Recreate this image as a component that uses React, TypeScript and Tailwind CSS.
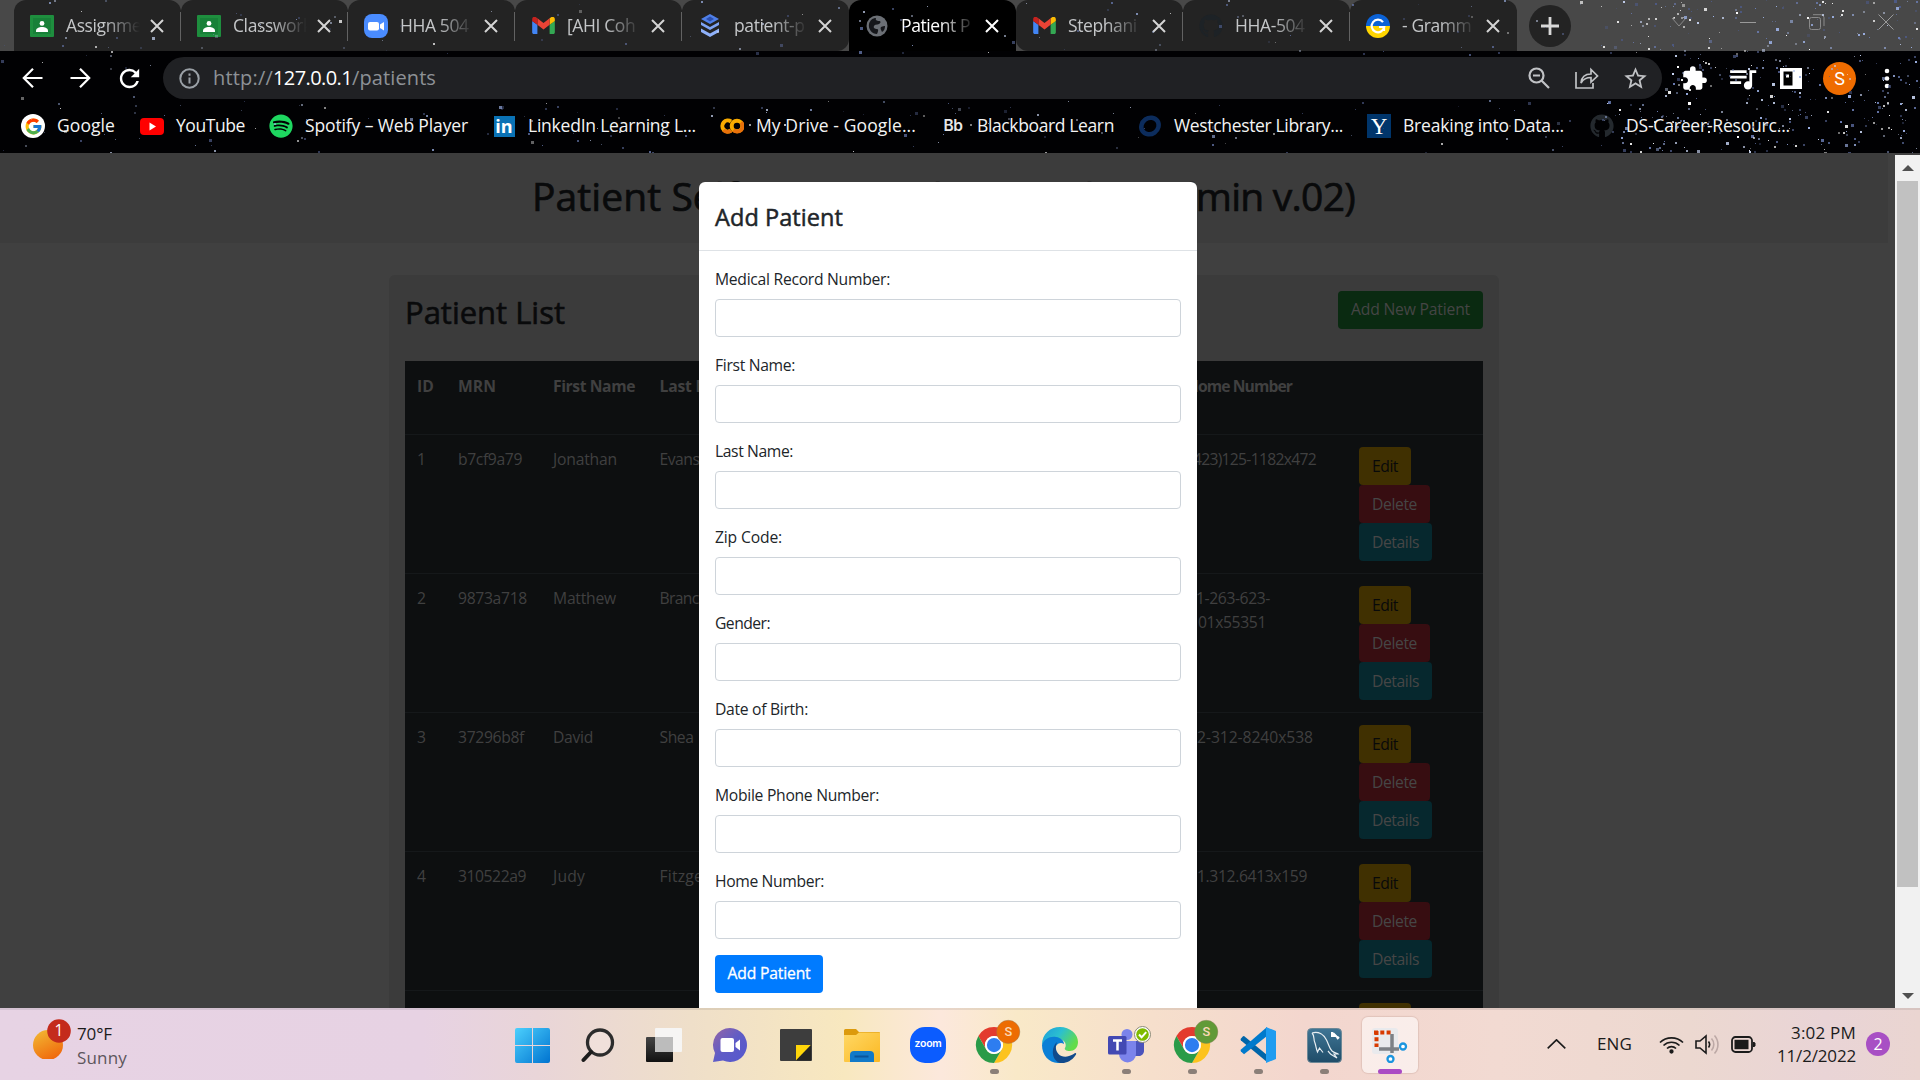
import { useLayoutEffect, useMemo, useRef, useState } from "react";
import type { ReactNode } from "react";
import { FcGoogle } from "react-icons/fc";
import { FaGithub, FaSpotify } from "react-icons/fa";
import { MdExtension, MdQueueMusic, MdRefresh, MdStarBorder } from "react-icons/md";

/* Single line of text whose letter spacing is adjusted so it spans a given width. */
function Fit({ w, children, className = "" }: { w: number; children: string; className?: string }) {
  const ref = useRef<HTMLSpanElement>(null);
  const [spacing, setSpacing] = useState(0);
  useLayoutEffect(() => {
    if (ref.current) setSpacing((w - ref.current.getBoundingClientRect().width) / children.length);
  }, [w, children]);
  return (
    <span ref={ref} className={`inline-block whitespace-pre ${className}`} style={{ letterSpacing: spacing }}>
      {children}
    </span>
  );
}

function Stars() {
  const stars = useMemo(() => {
    let seed = 41;
    const rnd = () => {
      seed = (seed * 16807) % 2147483647;
      return seed / 2147483647;
    };
    const out: { x: number; y: number; s: number; c: string; o: number }[] = [];
    const tints = ["#ffffff", "#9fb4e8", "#6d7fb8", "#c9d6f5", "#4d5a86"];
    for (let i = 0; i < 950; i++) {
      const right = i > 500;
      const x = right ? 1600 + rnd() * 320 : rnd() * 1660;
      const y = rnd() * 153;
      const s = rnd() > 0.88 ? 3 : rnd() > 0.4 ? 2 : 1;
      const c = tints[Math.floor(rnd() * tints.length)];
      const o = right ? 0.35 + rnd() * 0.65 : 0.25 + rnd() * 0.5;
      if (x > 160 && x < 1664 && y > 54 && y < 100) continue;
      if (y < 51 && x < 1600 && rnd() > 0.5) continue;
      out.push({ x: Math.round(x), y: Math.round(y), s, c, o });
    }
    return out;
  }, []);
  return (
    <svg className="pointer-events-none absolute inset-0" width="1920" height="153" viewBox="0 0 1920 153">
      {stars.map((p, i) => (
        <rect key={i} x={p.x} y={p.y} width={p.s} height={p.s} fill={p.c} opacity={p.o} />
      ))}
    </svg>
  );
}

const Classroom = () => (
  <svg width="24" height="22" viewBox="0 0 24 22">
    <rect width="24" height="22" rx="1" fill="#1e8e3e" />
    <rect x="3" y="3" width="18" height="16" fill="#188038" />
    <circle cx="12" cy="8.4" r="2.4" fill="#fff" />
    <path d="M6 16c0-3 3-4 6-4s6 1 6 4v1H6z" fill="#fff" />
  </svg>
);
const ZoomCam = () => (
  <svg width="24" height="24" viewBox="0 0 24 24">
    <rect width="24" height="24" rx="8" fill="#4a8cff" />
    <rect x="4" y="8" width="11" height="8.5" rx="2" fill="#fff" />
    <path d="M16 10.5 20 8v8.500l-4-2.500z" fill="#fff" />
  </svg>
);
const Gmail = () => (
  <svg width="23" height="17" viewBox="0 0 52 39">
    <path d="M3.500 39H12V18L0 9v26.500C0 37.500 1.600 39 3.500 39z" fill="#4285f4" />
    <path d="M40 39h8.500c2 0 3.500-1.600 3.500-3.500V9l-12 9z" fill="#34a853" />
    <path d="M40 3v15l12-9V5c0-4.500-5-7-8.500-4.500z" fill="#fbbc04" />
    <path d="M12 18V3l14 10.500L40 3v15L26 28.500z" fill="#ea4335" />
    <path d="M0 5v4l12 9V3L8.500.5C5-2 0 .5 0 5z" fill="#c5221f" />
  </svg>
);
const Stack = () => (
  <svg width="20" height="23" viewBox="0 0 20 23">
    <path d="M10 0 19 5 10 10 1 5z" fill="#4f7fe8" />
    <path d="M10 2.500 14 5 10 7.500 6 5z" fill="#2b4fae" />
    <path d="M1 8l9 5 9-5v3l-9 5-9-5z" fill="#7ea4f5" />
    <path d="M1 14.500l9 5 9-5v3.500l-9 5-9-5z" fill="#8fb1fa" />
  </svg>
);
const Globe = () => (
  <svg width="22" height="22" viewBox="0 0 22 22">
    <circle cx="11" cy="11" r="10.500" fill="#6b6f75" />
    <path d="M3 9c1-4 4-6 7-6-1 2 1 3 3 3s2 2 0 3-4 0-5 2 1 3 3 3 1 3 0 5c-5 0-9-5-8-10zM15 12c2-1 3-1 4-1 0 3-1 5-3 6-1-2-2-4-1-5z" fill="#15161a" />
  </svg>
);
const Grammarly = () => (
  <svg width="24" height="24" viewBox="0 0 24 24">
    <path d="M0 12a12 12 0 0 1 24 0z" fill="#0b62d6" />
    <path d="M0 12a12 12 0 0 0 24 0z" fill="#ffd500" />
    <path d="M17 8.200a6.300 6.300 0 1 0 1.200 4.800H13M18 17v-4" fill="none" stroke="#fff" strokeWidth="2.200" />
  </svg>
);

const tabs: { icon: ReactNode; title: string; active?: boolean }[] = [
  { icon: <Classroom />, title: "Assignme" },
  { icon: <Classroom />, title: "Classwork" },
  { icon: <ZoomCam />, title: "HHA 504" },
  { icon: <Gmail />, title: "[AHI Coh" },
  { icon: <Stack />, title: "patient-p" },
  { icon: <Globe />, title: "Patient P", active: true },
  { icon: <Gmail />, title: "Stephani" },
  { icon: <FaGithub className="size-6 text-[#1d2226]" />, title: "HHA-504" },
  { icon: <Grammarly />, title: "- Gramm" },
];

function TabStrip() {
  return (
    <div className="flex h-[51px] bg-[#484848] pl-3.5">
      {tabs.map((t, i) => {
        const line = i !== 4 && i !== 5 && i !== 8;
        return (
          <div key={i} className={`relative flex h-full w-[167px] shrink-0 items-center rounded-t-xl pl-4 ${t.active ? "bg-black" : i === 4 ? "rounded-br-xl bg-[#232323]" : i === 6 ? "rounded-bl-xl bg-[#232323]" : "bg-[#232323]"}`}>
            <span className="flex w-6 justify-center">{t.icon}</span>
            <span className={`ml-3 w-[74px] overflow-hidden text-[17.5px] tracking-[-0.4px] whitespace-nowrap [mask-image:linear-gradient(to_right,black_52%,transparent)] ${t.active ? "text-white" : "text-[#c4c6c8]"}`}>{t.title}</span>
            <svg className="ml-[10px]" width="14" height="14" viewBox="0 0 14 14">
              <path d="M1 1l12 12M13 1 1 13" stroke={t.active ? "#fff" : "#d4d4d4"} strokeWidth="2" />
            </svg>
            {line && <span className="absolute top-3 right-0 h-[29px] w-px bg-[#626262]" />}
          </div>
        );
      })}
      <div className="mt-[5px] ml-[12px] flex size-[42px] items-center justify-center rounded-full bg-[#232323]">
        <svg width="18" height="18" viewBox="0 0 18 18"><path d="M9 0v18M0 9h18" stroke="#d8d8d8" strokeWidth="2.800" /></svg>
      </div>
      <div className="ml-auto flex h-[43px] items-center gap-[53px] pr-[26px]">
        <svg width="16" height="16" viewBox="0 0 16 16"><path d="M1 4l7 8 7-8" fill="none" stroke="#8a8a8a" /></svg>
        <svg width="16" height="16" viewBox="0 0 16 16"><path d="M0 8.500h16" stroke="#9a9a9a" /></svg>
        <svg width="16" height="16" viewBox="0 0 16 16"><path d="M.5 5.500a2 2 0 0 1 2-2h7a2 2 0 0 1 2 2v8a2 2 0 0 1-2 2h-7a2 2 0 0 1-2-2zM4 .7h8a3 3 0 0 1 3 3V12" fill="none" stroke="#8a8a8a" /></svg>
        <svg width="16" height="16" viewBox="0 0 16 16"><path d="M.5.500l15 15M15.500.500l-15 15" stroke="#9a9a9a" /></svg>
      </div>
    </div>
  );
}

function Toolbar() {
  return (
    <div className="flex h-[54px] items-center pl-[22px]">
      <div className="flex w-[141px] items-center gap-[27px]">
        <svg width="21" height="20" viewBox="0 0 21 20"><path d="M20.500 10H2M11 .8 1.800 10l9.200 9.200" fill="none" stroke="#fff" strokeWidth="2.200" /></svg>
        <svg width="21" height="20" viewBox="0 0 21 20"><path d="M.5 10H19M10 .8l9.200 9.200L10 19.200" fill="none" stroke="#fff" strokeWidth="2.200" /></svg>
        <MdRefresh className="-ml-[3px] size-[29px] text-white" />
      </div>
      <div className="flex h-[42px] w-[1499px] items-center rounded-full bg-[#202124] pl-4">
        <svg width="21" height="21" viewBox="0 0 21 21"><circle cx="10.500" cy="10.500" r="9.200" fill="none" stroke="#9aa0a6" strokeWidth="2" /><path d="M10.500 9.500v6M10.500 5.500v2.200" stroke="#9aa0a6" strokeWidth="2" /></svg>
        <div className="ml-[13px] flex text-[20px] leading-none text-[#8d9196]">
          <Fit w={60}>http://</Fit>
          <Fit w={79} className="text-white">127.0.0.1</Fit>
          <Fit w={84}>/patients</Fit>
        </div>
        <div className="mr-[13px] ml-auto flex items-center gap-[25px] text-[#c0c2c5]">
          <svg width="22" height="22" viewBox="0 0 22 22" fill="none" stroke="currentColor" strokeWidth="2.200"><circle cx="8.500" cy="8.500" r="7" /><path d="M13.500 13.500 21 21M5 8.500h7" /></svg>
          <svg width="24" height="22" viewBox="0 0 24 22" fill="none" stroke="currentColor" strokeWidth="1.700"><path d="M1 5v16h17v-5M6 16c.5-6 4-9 10-9V2.500l6.500 6.500L16 15v-4.500c-5 0-8 2-10 5.500z" /></svg>
          <MdStarBorder className="-ml-[2px] size-[27px]" />
        </div>
      </div>
      <div className="ml-[19px] flex items-center text-white">
        <MdExtension className="size-[27px]" />
        <MdQueueMusic className="ml-[18px] size-[33px]" />
        <svg className="ml-[21px]" width="22" height="21" viewBox="0 0 22 21"><rect width="22" height="21" fill="#fff" /><path d="M3.500 3.500h9v14h-9z" fill="#000" /><rect x="6" y="6.500" width="3" height="3" fill="#fff" /></svg>
        <span className="ml-[21px] flex size-[33px] items-center justify-center rounded-full bg-[#ef6c00] font-[Roboto] text-[18px]">S</span>
        <svg className="ml-[28px]" width="6" height="21" viewBox="0 0 6 21" fill="#fff"><circle cx="3" cy="3" r="2.300" /><circle cx="3" cy="10.500" r="2.300" /><circle cx="3" cy="18" r="2.300" /></svg>
      </div>
    </div>
  );
}

function Bookmark({ box, icon, label, w }: { box: string; icon: ReactNode; label: string; w: number }) {
  return (
    <div className={`flex shrink-0 items-center ${box}`}>
      <span className="flex w-6 justify-center">{icon}</span>
      <span className="mb-px ml-3 text-[17.500px] text-[#f4f4f4]"><Fit w={w}>{label}</Fit></span>
    </div>
  );
}

function Bookmarks() {
  return (
    <div className="flex h-[42px] items-center pl-[21px]">
      <Bookmark box="w-[119px]" w={58} label="Google" icon={<span className="flex size-6 items-center justify-center rounded-full bg-white"><FcGoogle className="size-[19px]" /></span>} />
      <Bookmark box="w-[129px]" w={69} label="YouTube" icon={<svg width="24" height="17" viewBox="0 0 24 17"><rect width="24" height="17" rx="4" fill="#f00" /><path d="M9.500 4.500v8l6.500-4z" fill="#fff" /></svg>} />
      <Bookmark box="w-[223px]" w={163} label="Spotify – Web Player" icon={<FaSpotify className="size-6 text-[#1ed760]" />} />
      <Bookmark box="w-[228px]" w={168} label="LinkedIn Learning L..." icon={<span className="flex h-[21px] w-[21px] items-center justify-center bg-[#0a72b5] pb-px text-[18px] leading-none font-bold text-white">in</span>} />
      <Bookmark box="w-[221px]" w={160} label="My Drive - Google..." icon={<svg width="24" height="16" viewBox="0 0 24 16" fill="none" strokeWidth="4"><path d="M11 3.500a5.500 5.500 0 1 0 0 9" stroke="#f9ab00" /><circle cx="17" cy="8" r="5.300" stroke="#f9ab00" /><path d="M3.500 12a5.500 5.500 0 0 0 7.500.5M21 4.500a5.300 5.300 0 0 1-7.500 7.500" stroke="#e8710a" /></svg>} />
      <Bookmark box="w-[197px]" w={137} label="Blackboard Learn" icon={<span className="font-[Inter] text-[15.500px] font-semibold tracking-[-0.5px] text-[#e8e8e8]">Bb</span>} />
      <Bookmark box="w-[229px]" w={169} label="Westchester Library..." icon={<svg width="24" height="24" viewBox="0 0 24 24"><ellipse cx="12" cy="12" rx="9" ry="8" transform="rotate(-35 12 12)" fill="none" stroke="#0c2c5c" strokeWidth="4.500" /></svg>} />
      <Bookmark box="w-[223px]" w={161} label="Breaking into Data..." icon={<span className="flex size-6 items-center justify-center bg-[#00356b] font-['Liberation_Serif'] text-[23px] leading-none text-white">Y</span>} />
      <Bookmark box="w-[220px]" w={164} label="DS-Career-Resourc..." icon={<FaGithub className="size-6 text-[#24292e]" />} />
    </div>
  );
}

const patients = [
  { id: "1", mrn: "b7cf9a79", mw: 64, first: "Jonathan", fw: 64, last: "Evans", lw: 40, home: [{ t: "(423)125-1182x472", box: "w-[129px]", w: 127 }] },
  { id: "2", mrn: "9873a718", mw: 69, first: "Matthew", fw: 63, last: "Branch", lw: 48, home: [{ t: "1-263-623-", box: "w-[83px]", w: 74 }, { t: "01x55351", box: "w-[79px]", w: 68 }] },
  { id: "3", mrn: "37296b8f", mw: 66, first: "David", fw: 40, last: "Shea", lw: 34, home: [{ t: "2-312-8240x538", box: "w-[126px]", w: 116 }] },
  { id: "4", mrn: "310522a9", mw: 68, first: "Judy", fw: 32, last: "Fitzgerald", lw: 73, home: [{ t: "1.312.6413x159", box: "w-[120px]", w: 110 }] },
];

const grid = "grid grid-cols-[41px_95px_106.500px_527.500px_172px_1fr] pl-3";

function Actions() {
  return (
    <div className="flex flex-col items-start text-[15.700px] text-[#464646]">
      <span className="flex h-[38px] w-[52px] items-center justify-center rounded bg-[#403001] text-[#08090a]"><Fit w={26}>Edit</Fit></span>
      <span className="flex h-[38px] w-[71px] items-center justify-center rounded bg-[#370d11]"><Fit w={45}>Delete</Fit></span>
      <span className="flex h-[38px] w-[73px] items-center justify-center rounded bg-[#06282e]"><Fit w={47}>Details</Fit></span>
    </div>
  );
}

const headings: [string, number][] = [["ID", 17], ["MRN", 38], ["First Name", 82], ["Last Name", 82], ["Home Number", 105]];

function PatientPage() {
  return (
    <div className="h-full overflow-hidden bg-[#404040]">
      <div className="h-[90px] w-[1888px] bg-[#3c3c3c] pt-[19px] pl-[532px]">
        <h1 className="flex w-[823px] justify-between text-[39px] leading-[48px] text-[#090a0b] [-webkit-text-stroke:0.7px_#090a0b]">
          <Fit w={206}>Patient Self</Fit>
          <Fit w={160}>Managed</Fit>
          <Fit w={110}>Portal</Fit>
          <Fit w={217}>(Admin v.02)</Fit>
        </h1>
      </div>
      <div className="mt-8 ml-[389px] w-[1110px] rounded-t-md bg-[#3b3b3b] px-4 pt-4">
        <div className="flex h-[70px] items-start justify-between">
          <h2 className="text-[31px] leading-[42px] text-[#090a0b] [-webkit-text-stroke:0.6px_#090a0b]"><Fit w={160}>Patient List</Fit></h2>
          <span className="flex h-[38px] w-[145px] items-center justify-center rounded bg-[#0a2a11] text-[15.700px] text-[#454545]"><Fit w={119}>Add New Patient</Fit></span>
        </div>
        <div className="w-[1078px] bg-[#0d0f10] text-[15.700px] text-[#404040]">
          <div className={`h-[73px] pt-[13px] font-bold leading-6 ${grid}`}>
            {headings.map(([label, w]) => (
              <span key={label}><Fit w={w}>{label}</Fit></span>
            ))}
          </div>
          {patients.map((p) => (
            <div key={p.id} className={`h-[139px] border-t border-[#15181a] pt-3 leading-6 ${grid}`}>
              <span>{p.id}</span>
              <span><Fit w={p.mw}>{p.mrn}</Fit></span>
              <span><Fit w={p.fw}>{p.first}</Fit></span>
              <span><Fit w={p.lw}>{p.last}</Fit></span>
              <span className="flex flex-col">
                {p.home.map((h) => (
                  <span key={h.t} className={`flex justify-end ${h.box}`}><Fit w={h.w}>{h.t}</Fit></span>
                ))}
              </span>
              <Actions />
            </div>
          ))}
          <div className={`h-[139px] border-t border-[#15181a] pt-3 ${grid}`}>
            <span className="col-start-6"><Actions /></span>
          </div>
        </div>
      </div>
    </div>
  );
}

const fields: [string, number][] = [
  ["Medical Record Number:", 175], ["First Name:", 80], ["Last Name:", 78], ["Zip Code:", 67],
  ["Gender:", 55], ["Date of Birth:", 93], ["Mobile Phone Number:", 164], ["Home Number:", 109],
];

function AddPatientModal() {
  return (
    <div className="absolute top-[29px] left-[699px] h-[900px] w-[498px] rounded-md bg-white text-[#212529]">
      <div className="h-[69px] border-b border-[#dee2e6] px-4 pt-[17px] text-[23.500px] leading-9 [-webkit-text-stroke:0.5px_#212529]"><Fit w={128}>Add Patient</Fit></div>
      <div className="px-4 pt-4">
        {fields.map(([label, w]) => (
          <div key={label} className="mb-4">
            <label className="block h-8 text-[15.700px] leading-6"><Fit w={w}>{label}</Fit></label>
            <div className="h-[38px] rounded border border-[#ced4da]" />
          </div>
        ))}
        <button className="flex h-[38px] w-[108px] items-center justify-center rounded bg-[#007bff] text-[15.700px] text-white [-webkit-text-stroke:0.3px_#fff]"><Fit w={83}>Add Patient</Fit></button>
      </div>
    </div>
  );
}

function Scrollbar() {
  return (
    <div className="mt-0.5 flex w-[25px] flex-col items-center bg-[#f1f1f1]">
      <div className="flex h-[26px] items-center"><svg width="12" height="6" viewBox="0 0 12 6"><path d="M0 6 6 0l6 6z" fill="#505050" /></svg></div>
      <div className="h-[706px] w-[21px] bg-[#c1c1c1]" />
      <div className="mt-auto flex h-[25px] items-center"><svg width="12" height="6" viewBox="0 0 12 6"><path d="M0 0h12L6 6z" fill="#505050" /></svg></div>
    </div>
  );
}

const ChromeIcon = ({ color }: { color: string }) => (
  <svg className="overflow-visible" width="36" height="36" viewBox="0 0 48 48">
    <path d="M24 12H44.800A24 24 0 0 0 3.200 12L13.600 30A12 12 0 0 1 24 12z" fill="#e33b2e" />
    <path d="M44.800 12A24 24 0 0 1 24 48L34.400 30A12 12 0 0 0 24 12z" fill="#fcc31e" />
    <path d="M3.200 12A24 24 0 0 0 24 48L34.400 30A12 12 0 0 1 13.600 30z" fill="#2a9b48" />
    <circle cx="24" cy="24" r="12" fill="#fff" />
    <circle cx="24" cy="24" r="9.500" fill="#2d7df0" />
    <circle cx="43" cy="6.500" r="15.500" fill={color} stroke="#8d7a5e" strokeOpacity=".5" />
    <text x="43" y="12.500" textAnchor="middle" fontFamily="Roboto" fontWeight="500" fontSize="17" fill="#fbd9b8">S</text>
  </svg>
);

const dock: { icon: ReactNode; run?: boolean; active?: boolean }[] = [
  { icon: <svg width="35" height="35" viewBox="0 0 35 35"><defs><linearGradient id="win" gradientUnits="userSpaceOnUse" x1="0" y1="0" x2="35" y2="35"><stop stopColor="#4cd0fd" /><stop offset="1" stopColor="#0073d0" /></linearGradient></defs><path d="M2 0h15v17H0V2a2 2 0 0 1 2-2zM18 0h15a2 2 0 0 1 2 2v15H18zM0 18h17v17H2a2 2 0 0 1-2-2zM18 18h17v15a2 2 0 0 1-2 2H18z" fill="url(#win)" /></svg> },
  { icon: <svg width="34" height="35" viewBox="0 0 34 35"><circle cx="19" cy="14.500" r="12.500" fill="#f3e5df" fillOpacity=".6" stroke="#2c2c2c" strokeWidth="3.300" /><path d="M10 24l-7.500 8" stroke="#1c1c1c" strokeWidth="4" strokeLinecap="round" /></svg> },
  { icon: <svg width="36" height="34" viewBox="0 0 36 34"><defs><linearGradient id="tv" x1="0" y1="0" x2="0" y2="1"><stop stopColor="#444" /><stop offset="1" stopColor="#111" /></linearGradient></defs><rect y="9" width="27" height="25" rx="1" fill="url(#tv)" /><rect x="9" width="27" height="24" rx="1" fill="#f6f6f6" fillOpacity=".94" /><rect x="9" y="9" width="18" height="15" fill="#bcbcbc" /></svg> },
  { icon: <svg width="34" height="34" viewBox="0 0 34 34"><defs><linearGradient id="chat" x1="0" y1="0" x2="1" y2="1"><stop stopColor="#9565a6" /><stop offset=".5" stopColor="#5f5cc6" /><stop offset="1" stopColor="#5558cf" /></linearGradient></defs><path d="M17 0a17 17 0 1 1-7 32.500L0 34l2-9A17 17 0 0 1 17 0z" fill="url(#chat)" /><rect x="7.500" y="10" width="13.500" height="14" rx="2" fill="#fff" /><path d="M22.500 15 27 11.500v11L22.500 19z" fill="#fff" /></svg> },
  { icon: <svg width="32" height="32" viewBox="0 0 32 32"><rect width="32" height="32" rx="1" fill="#3d3d3d" /><path d="M16 16h15L16 31.500z" fill="#ffd60a" /><path d="M31 16 16 31.500h15z" fill="#242424" /></svg> },
  { icon: <svg width="36" height="33" viewBox="0 0 36 33"><defs><linearGradient id="fold" x1="0" y1="0" x2="1" y2="1"><stop stopColor="#ffd865" /><stop offset="1" stopColor="#fbb823" /></linearGradient></defs><path d="M0 1.500A1.500 1.500 0 0 1 1.500 0H12l3 3h20a1 1 0 0 1 1 1v6H0z" fill="#dc9a0c" /><path d="M0 6h12l3-2.500h21V32a1 1 0 0 1-1 1H1a1 1 0 0 1-1-1z" fill="url(#fold)" /><path d="M6 33v-7a4 4 0 0 1 4-4h16a4 4 0 0 1 4 4v7z" fill="#1279c8" /><path d="M10.500 27.500h14" stroke="#0b559b" strokeWidth="2" /></svg> },
  { icon: <span className="flex size-9 items-center justify-center rounded-[15px] bg-[#0b5cff] pb-0.5 font-[Inter] text-[10.500px] font-semibold tracking-[-0.2px] text-white">zoom</span> },
  { icon: <ChromeIcon color="#ed6c02" />, run: true },
  { icon: <svg width="36" height="36" viewBox="0 0 36 36"><defs><linearGradient id="edge" x1="0" y1="0" x2="1" y2=".5"><stop stopColor="#1c9bdc" /><stop offset=".5" stopColor="#2bbfd0" /><stop offset="1" stopColor="#63dc4a" /></linearGradient></defs><path d="M0 18C0 7 8 0 18 0s18 7 18 15c0 6-4 9-8 9s-6-1.500-5-3c2-3 0-8-5-9C10 10 3 13 0 18z" fill="url(#edge)" /><path d="M0 18c2-6 8-9 14-8 5 .5 8 4 8 7-5-3-10 2-9 8 1 5 5 9 10 10C11 39 0 31 0 18z" fill="#0b7fd6" /><path d="M15 15c-4 9 3 17 12 14 3-1 5-2 6-3 1 0 1.500.5 1 1.500C31 33 24 37 18 36 9 33 9 20 15 15z" fill="#114a8b" /></svg> },
  { icon: <svg className="overflow-visible" width="36" height="36" viewBox="0 0 36 36"><circle cx="19" cy="7.500" r="5.500" fill="#7b83eb" /><path d="M26 14h10v10c0 3-3 5-5 5h-5z" fill="#4b53bc" /><path d="M11 14h17v13a8 8 0 0 1-17 0z" fill="#7b83eb" /><rect y="9" width="18.500" height="18.500" rx="1.500" fill="#4349b3" /><path d="M5 13.500h9M9.500 13.500v10" stroke="#fff" strokeWidth="2.500" /><circle cx="34.500" cy="7.500" r="8" fill="#fff" stroke="#8c8a78" /><circle cx="34.500" cy="7.500" r="6.300" fill="#7fba00" /><path d="M31 7.500l2.600 2.800 4.600-5.200" stroke="#fff" strokeWidth="2" fill="none" /></svg>, run: true },
  { icon: <ChromeIcon color="#619a38" />, run: true },
  { icon: <svg width="36" height="36" viewBox="0 0 36 36"><path d="M4 9 27 28v7L1 13.500a1.500 1.500 0 0 1 0-2L3 9.300z" fill="#0065a9" /><path d="M27 0v9L4 27.200 1 24.600a1.500 1.500 0 0 1 0-2z" fill="#007acc" /><path d="M26 0l10 4v28l-10 4z" fill="#1f9cf0" /></svg>, run: true },
  { icon: <svg width="35" height="35" viewBox="0 0 35 35"><defs><linearGradient id="sql" x1="0" y1="0" x2="0" y2="1"><stop stopColor="#3f7595" /><stop offset="1" stopColor="#1f4c68" /></linearGradient></defs><rect x=".5" y=".5" width="34" height="34" rx="4" fill="url(#sql)" stroke="#6d8896" /><path d="M5 5c7-2 12 2 14.500 7s3 9 5.500 11 5 2 6 3l-4 0 3 4-5-3c-2-1-3-3-4-4M5 5c3 3 1 6 3 10 1 3 1 5 2.500 9l2-4 3.500 4.500" fill="none" stroke="#e8eef2" strokeWidth="1.200" /><path d="M26 5l5 5M25 4v4h4M30 11l2-2" stroke="#fff" strokeWidth="2" fill="none" /></svg>, run: true },
  { icon: <svg width="36" height="36" viewBox="0 0 36 36"><rect x="0" y="1" width="26" height="26" rx="3" fill="#e9eaed" /><path d="M2 5.500h17M4.500 4v16" stroke="#d83b01" strokeWidth="4" strokeDasharray="4 2.300" fill="none" /><path d="M20 7v19M7 22h20" stroke="#7d8186" strokeWidth="3.500" /><circle cx="31" cy="19.500" r="3" fill="#fff" stroke="#1b95df" strokeWidth="2.300" /><circle cx="18.500" cy="32" r="3" fill="#fff" stroke="#1b95df" strokeWidth="2.300" /></svg>, active: true },
];

function Taskbar() {
  return (
    <div className="flex h-[72px] border-t-2 border-black/8 bg-[linear-gradient(90deg,#e7d3e4_0%,#e7d2e3_22%,#e9d5d8_28%,#efdfc9_36%,#f8e8bf_44%,#fce8dc_49%,#f9e9c8_53%,#f6dfcc_60%,#f3d6ce_68%,#f2dad2_78%,#ecd8d0_88%,#e9d4d6_95%,#ead5d1_100%)] bg-origin-border text-[#1b1b1b]">
      <div className="flex w-[499px] items-start pt-[5px] pl-[33px]">
        <svg width="38" height="44" viewBox="0 0 38 44"><defs><linearGradient id="sun" x1=".2" y1="0" x2=".7" y2="1"><stop stopColor="#f2b632" /><stop offset="1" stopColor="#f0660b" /></linearGradient></defs><circle cx="15" cy="30" r="15" fill="url(#sun)" /><circle cx="26" cy="16" r="11.800" fill="#c42b1c" /><text x="26" y="21" textAnchor="middle" fontFamily="Open Sans" fontSize="15.500" fill="#fff">1</text></svg>
        <div className="ml-[6px] pt-[7px] text-[17px] leading-6">
          <div><Fit w={35}>70°F</Fit></div>
          <div className="text-[#5d565c]"><Fit w={50}>Sunny</Fit></div>
        </div>
      </div>
      {dock.map((d, i) => (
        <div key={i} className="flex w-[66px] shrink-0 justify-center pt-[7px]">
          <div className={`flex h-[56px] w-[56px] flex-col items-center rounded-md pt-[10px] ${d.active ? "bg-white/55 shadow-[0_0_1px_1px_rgba(160,120,110,0.2)]" : ""}`}>
            <div className="flex h-9 shrink-0 items-center justify-center">{d.icon}</div>
            {d.run && <span className="mt-[6px] h-[5px] w-[9px] shrink-0 rounded-full bg-[#8b7f78]" />}
            {d.active && <span className="mt-[6px] h-[5px] w-6 shrink-0 rounded-full bg-[#aa4bc4]" />}
          </div>
        </div>
      ))}
      <div className="ml-auto flex items-center pr-[30px] pb-0.5 text-[17px]">
        <svg width="19" height="10" viewBox="0 0 19 10"><path d="M.7 9.300 9.500.800l8.800 8.500" fill="none" stroke="#1b1b1b" strokeWidth="1.600" /></svg>
        <span className="ml-[31px]"><Fit w={35}>ENG</Fit></span>
        <svg className="ml-[27px]" width="25" height="19" viewBox="0 0 25 19" fill="none" stroke="#1b1b1b" strokeWidth="1.700"><path d="M1 7.500a16.500 16.500 0 0 1 23 0M4.500 10.500a11.500 11.500 0 0 1 16 0M8 13.500a6.500 6.500 0 0 1 9 0" /><circle cx="12.500" cy="16.500" r="1.300" fill="#1b1b1b" /></svg>
        <svg className="ml-[11px]" width="25" height="21" viewBox="0 0 25 21" fill="none" stroke="#1b1b1b" strokeWidth="1.600"><path d="M1 7h4l6-5v17l-6-5H1z" /><path d="M13.500 7.500a5 5 0 0 1 0 6" /><path d="M16.500 4.500a9 9 0 0 1 0 12M19.500 1.500a13.500 13.500 0 0 1 0 18" stroke="#bda9a6" /></svg>
        <svg className="ml-[11px]" width="25" height="17" viewBox="0 0 25 17"><rect x="1" y="1" width="20" height="15" rx="3.500" fill="none" stroke="#1b1b1b" strokeWidth="1.800" /><rect x="3.500" y="3.800" width="14" height="9.400" fill="#1b1b1b" /><path d="M22 6h1.500l1 1.500v2l-1 1.500H22z" fill="#1b1b1b" /></svg>
        <div className="ml-[21px] flex flex-col items-end leading-[23px]">
          <Fit w={65}>3:02 PM</Fit>
          <Fit w={79}>11/2/2022</Fit>
        </div>
        <span className="ml-[10px] flex size-6 items-center justify-center rounded-full bg-[#a84fc4] text-[16px] text-white">2</span>
      </div>
    </div>
  );
}

export default function App() {
  return (
    <div className="flex h-[1080px] w-[1920px] flex-col overflow-hidden font-['Open_Sans',sans-serif]">
      <header className="relative h-[153px] shrink-0 bg-[#010103]">
        <TabStrip />
        <Toolbar />
        <Bookmarks />
        <Stars />
      </header>
      <main className="relative flex h-[855px] overflow-hidden bg-[#404040]">
        <div className="w-[1895px]"><PatientPage /></div>
        <Scrollbar />
        <AddPatientModal />
      </main>
      <Taskbar />
    </div>
  );
}
